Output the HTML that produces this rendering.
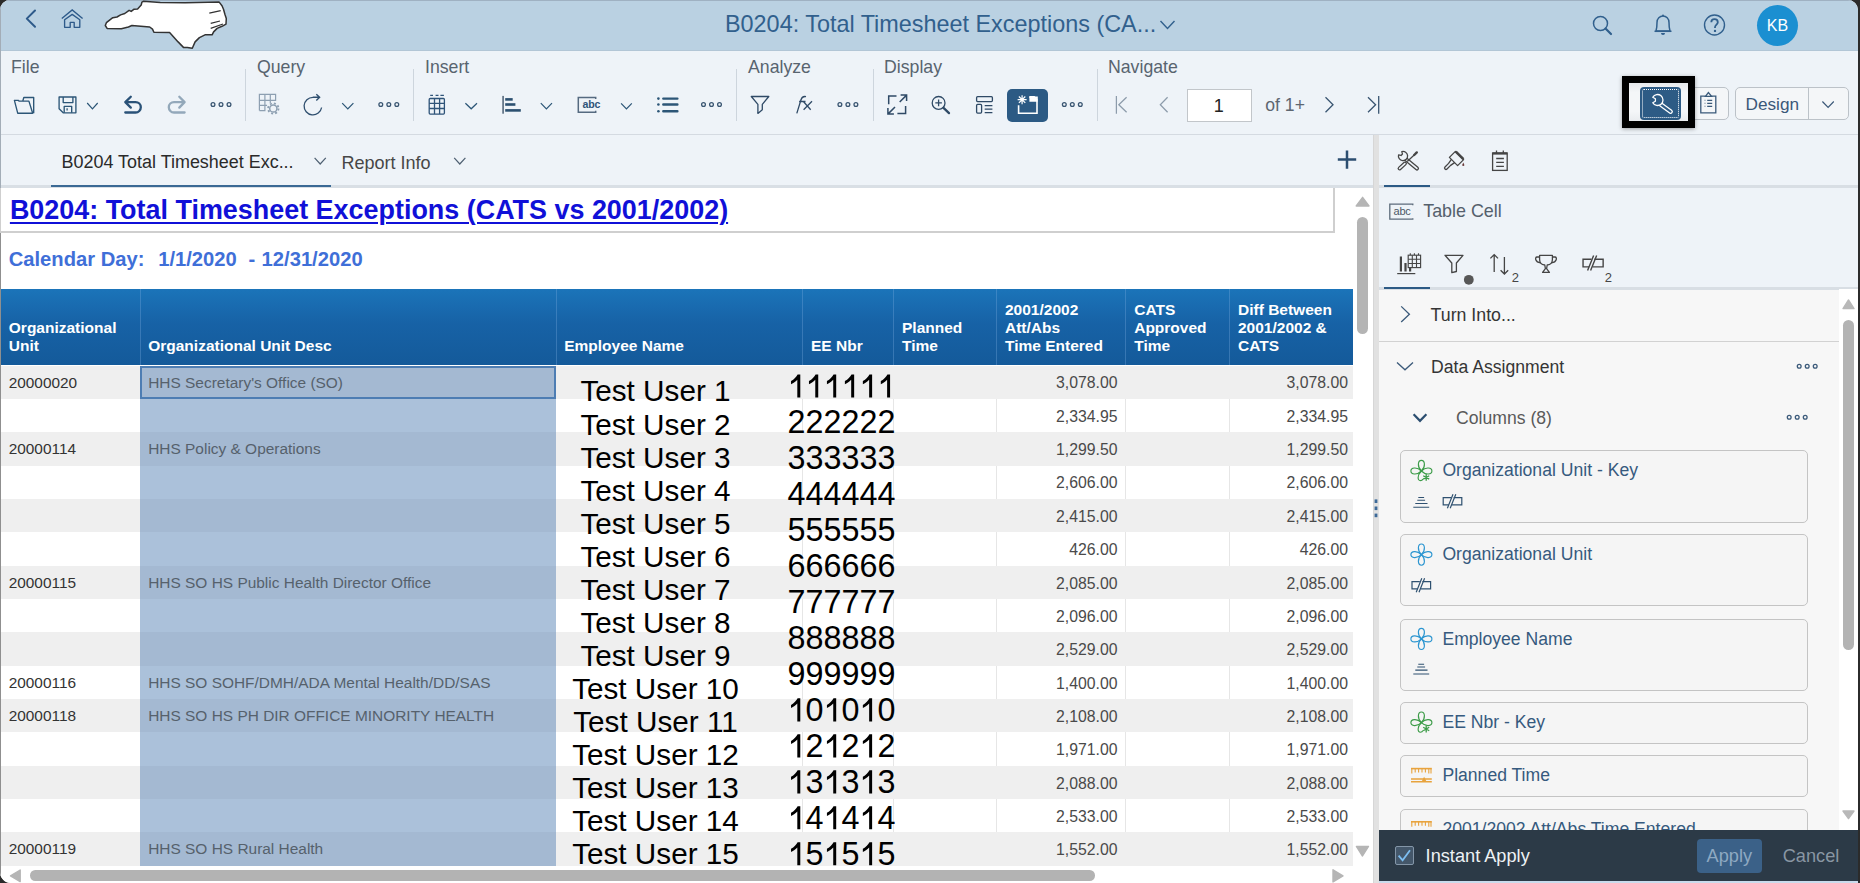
<!DOCTYPE html>
<html><head><meta charset="utf-8"><style>
*{box-sizing:border-box;margin:0;padding:0}
html,body{width:1860px;height:883px;overflow:hidden;background:#2b2b2b;font-family:"Liberation Sans",sans-serif}
.a{position:absolute}
.t{position:absolute;white-space:pre;line-height:1}
svg{position:absolute;overflow:visible}
#win{position:absolute;left:0;top:0;width:1858px;height:883px;border-radius:10px 10px 0 11px;overflow:hidden;background:#fff}
</style></head><body><div id="win">
<div class="a" style="left:0px;top:0px;width:1858px;height:51px;background:#bad1e2;border-top:1px solid #9fb1c2;border-bottom:1px solid #b2c6d6"></div>
<svg style="left:24px;top:8px;" width="16" height="22" viewBox="0 0 16 22"><path d="M11 2.5 L2.8 10.6 L11 18.8" fill="none" stroke="#2e5a8a" stroke-width="2" stroke-linecap="round" stroke-linejoin="round"/></svg>
<svg style="left:100px;top:0px;" width="132" height="52" viewBox="0 0 132 52"><path d="M5.3 25.5 L6.4 22.7 L9.9 19.9 L12.8 17.7 L17 17 L20.6 14.9 L24.8 13.5 L29.1 10.3 L31.2 11.4 L34.1 9.2 L37.6 8.9 L41.2 5 L41.9 2.1 L43.3 1.3 L60.3 2.5 L85.2 2.8 L119.2 2.1 L122 5.7 L123.5 9.2 L124.9 14.2 L126.3 18.5 L126 24.1 L122 26.3 L117.1 28.4 L113.6 31.9 L112.1 34.8 L105 34.8 L99.4 37.6 L95.1 41.9 L92.3 48.3 L87.3 47.6 L83.7 47.6 L78.1 41.9 L69.6 32.6 L53.9 32.3 L52.5 29.1 L49.7 27 L31.9 25.5 L28.4 27 L21.3 28.7 L7.1 28.4 Z" fill="#fff" stroke="#333" stroke-width="1.5" stroke-linejoin="round"/><path d="M109.3 13.1 L120.7 10.6 M110.7 23.4 L120 21 M110.7 28.4 L123 24" stroke="#333" stroke-width="1.2" fill="none"/></svg>
<div class="t" style="left:725px;top:12.89px;font-size:23.4px;color:#31608d;font-weight:400;">B0204: Total Timesheet Exceptions (CA...</div>
<svg style="left:1159px;top:19px;" width="18" height="12" viewBox="0 0 18 12"><path d="M1.5 2 L8.5 9.5 L15.5 2" fill="none" stroke="#31608d" stroke-width="1.4"/></svg>
<svg style="left:1592px;top:15px;" width="22" height="22" viewBox="0 0 22 22"><circle cx="8.5" cy="8.5" r="7" fill="none" stroke="#31608d" stroke-width="1.5"/><path d="M13.5 13.5 L19 19" stroke="#31608d" stroke-width="2.2" stroke-linecap="round"/></svg>
<svg style="left:1652px;top:13px;" width="22" height="24" viewBox="0 0 22 24"><path d="M4 18 C5 15 5 12 5 9.5 C5 5.5 7.8 3 11 3 C14.2 3 17 5.5 17 9.5 C17 12 17 15 18 18 Z" fill="none" stroke="#31608d" stroke-width="1.5" stroke-linejoin="round"/><path d="M2.5 18.3 H19.5" stroke="#31608d" stroke-width="1.5"/><path d="M9 20 A2 2 0 0 0 13 20 Z" fill="#31608d"/><circle cx="11" cy="2.6" r="1" fill="#31608d"/></svg>
<svg style="left:1703px;top:14px;" width="23" height="23" viewBox="0 0 23 23"><circle cx="11.5" cy="11" r="10" fill="none" stroke="#31608d" stroke-width="1.4"/><path d="M8.3 8.3 C8.3 6.3 9.8 5.2 11.5 5.2 C13.4 5.2 14.8 6.4 14.8 8.2 C14.8 10.3 12 10.8 12 13.2 V14" fill="none" stroke="#31608d" stroke-width="1.8"/><circle cx="12" cy="16.9" r="1.2" fill="#31608d"/></svg>
<div class="a" style="left:1757px;top:5px;width:41px;height:41px;border-radius:50%;background:#1b8fd1"></div>
<div class="t" style="left:1757px;width:41px;text-align:center;top:17.86px;font-size:16px;color:#fff;font-weight:400">KB</div>
<div class="a" style="left:0px;top:51px;width:1858px;height:84px;background:#eef3f8;border-bottom:1px solid #d4dae1"></div>
<div class="t" style="left:11px;top:58.62px;font-size:17.7px;color:#58646f;font-weight:400;">File</div>
<div class="t" style="left:257px;top:58.62px;font-size:17.7px;color:#58646f;font-weight:400;">Query</div>
<div class="t" style="left:425px;top:58.62px;font-size:17.7px;color:#58646f;font-weight:400;">Insert</div>
<div class="t" style="left:748px;top:58.62px;font-size:17.7px;color:#58646f;font-weight:400;">Analyze</div>
<div class="t" style="left:884px;top:58.62px;font-size:17.7px;color:#58646f;font-weight:400;">Display</div>
<div class="t" style="left:1108px;top:58.62px;font-size:17.7px;color:#58646f;font-weight:400;">Navigate</div>
<div class="a" style="left:245px;top:69px;width:1px;height:52px;background:#cdd5dd"></div>
<div class="a" style="left:413px;top:69px;width:1px;height:52px;background:#cdd5dd"></div>
<div class="a" style="left:736px;top:69px;width:1px;height:52px;background:#cdd5dd"></div>
<div class="a" style="left:873px;top:69px;width:1px;height:52px;background:#cdd5dd"></div>
<div class="a" style="left:1097px;top:69px;width:1px;height:52px;background:#cdd5dd"></div>
<div class="a" style="left:1007px;top:89px;width:41px;height:33px;background:#2c5a84;border-radius:5px"></div>
<div class="a" style="left:1187px;top:89px;width:65px;height:33px;background:#fff;border:1px solid #c2c6ca"></div>
<div class="t" style="left:1213.8px;top:96.56px;font-size:18px;color:#222;font-weight:400;">1</div>
<div class="t" style="left:1265.3px;top:97.40px;font-size:17.6px;color:#5d6670;font-weight:400;">of 1+</div>
<div class="a" style="left:1686px;top:87px;width:43px;height:33px;background:#f4f6f8;border:1px solid #bcc2c8;border-radius:5px"></div>
<div class="a" style="left:1735px;top:87px;width:114px;height:33px;background:#f4f6f8;border:1px solid #bcc2c8;border-radius:5px"></div>
<div class="a" style="left:1808px;top:87px;width:1px;height:33px;background:#bcc2c8"></div>
<div class="t" style="left:1745.5px;top:95.94px;font-size:17.2px;color:#3b5878;font-weight:400;">Design</div>
<div class="a" style="left:1622px;top:76px;width:73px;height:52px;border:7px solid #000;background:linear-gradient(#e6e9ec,#f4f6f8 25%,#f4f6f8 75%,#e9ecef);box-shadow:0 1px 4px rgba(0,0,0,.35)"></div>
<div class="a" style="left:1640px;top:87px;width:41px;height:33px;background:#2d5b85;border-radius:4px"></div>
<div class="a" style="left:1642px;top:89px;width:37px;height:29px;border:1px dotted #ffffff;border-radius:2px"></div>
<div class="a" style="left:0px;top:135px;width:1373px;height:53px;background:#eef3f8"></div>
<div class="a" style="left:0px;top:185px;width:1373px;height:3px;background:#d9dfe5"></div>
<div class="a" style="left:51px;top:184.7px;width:280px;height:2.6px;background:#3a6994"></div>
<div class="t" style="left:61.6px;top:154.41px;font-size:17.95px;color:#2a2a2a;font-weight:400;">B0204 Total Timesheet Exc...</div>
<div class="t" style="left:341.4px;top:154.32px;font-size:18.05px;color:#474747;font-weight:400;">Report Info</div>
<div class="a" style="left:0px;top:188px;width:1373px;height:695px;background:#fff"></div>
<div class="a" style="left:0px;top:0px;width:1px;height:188px;background:#a3adb7"></div>
<div class="a" style="left:0px;top:188px;width:1335px;height:45px;border:2px solid #cfcfcf;border-top:none;border-left:1px solid #cfcfcf"></div>
<div class="t" style="left:9.9px;top:197.20px;font-size:26.93px;color:#1010d8;font-weight:700;"><u style="text-decoration-thickness:2px;text-underline-offset:3px">B0204: Total Timesheet Exceptions (CATS vs 2001/2002)</u></div>
<div class="t" style="left:8.7px;top:248.90px;font-size:20.2px;color:#3f6fd8;font-weight:700;">Calendar Day:</div>
<div class="t" style="left:158.2px;top:248.90px;font-size:20.2px;color:#3f6fd8;font-weight:700;">1/1/2020</div>
<div class="t" style="left:248.6px;top:248.90px;font-size:20.2px;color:#3f6fd8;font-weight:700;">-</div>
<div class="t" style="left:261.6px;top:248.90px;font-size:20.2px;color:#3f6fd8;font-weight:700;">12/31/2020</div>
<div class="a" style="left:1357px;top:216.6px;width:11px;height:117.4px;background:#b4b4b4;border-radius:5.5px"></div>
<div class="a" style="left:30px;top:870.3px;width:1065px;height:10.5px;background:#b3b3b3;border-radius:5.25px"></div>
<div class="a" style="left:0px;top:289px;width:1353px;height:76px;background:linear-gradient(#1b74b9,#1762a6 45%,#145a9a)"></div>
<div class="a" style="left:140px;top:289px;width:1px;height:76px;background:rgba(120,170,220,.35)"></div>
<div class="a" style="left:556px;top:289px;width:1px;height:76px;background:rgba(120,170,220,.35)"></div>
<div class="a" style="left:802px;top:289px;width:1px;height:76px;background:rgba(120,170,220,.35)"></div>
<div class="a" style="left:893px;top:289px;width:1px;height:76px;background:rgba(120,170,220,.35)"></div>
<div class="a" style="left:996px;top:289px;width:1px;height:76px;background:rgba(120,170,220,.35)"></div>
<div class="a" style="left:1125px;top:289px;width:1px;height:76px;background:rgba(120,170,220,.35)"></div>
<div class="a" style="left:1229px;top:289px;width:1px;height:76px;background:rgba(120,170,220,.35)"></div>
<div class="t" style="left:8.8px;top:320.03px;font-size:15.5px;color:#ffffff;font-weight:700;">Organizational</div>
<div class="t" style="left:8.8px;top:338.08px;font-size:15.5px;color:#ffffff;font-weight:700;">Unit</div>
<div class="t" style="left:148.2px;top:338.08px;font-size:15.5px;color:#ffffff;font-weight:700;">Organizational Unit Desc</div>
<div class="t" style="left:564.2px;top:338.08px;font-size:15.5px;color:#ffffff;font-weight:700;">Employee Name</div>
<div class="t" style="left:811px;top:338.08px;font-size:15.5px;color:#ffffff;font-weight:700;">EE Nbr</div>
<div class="t" style="left:902px;top:320.03px;font-size:15.5px;color:#ffffff;font-weight:700;">Planned</div>
<div class="t" style="left:902px;top:338.08px;font-size:15.5px;color:#ffffff;font-weight:700;">Time</div>
<div class="t" style="left:1005px;top:301.98px;font-size:15.5px;color:#ffffff;font-weight:700;">2001/2002</div>
<div class="t" style="left:1005px;top:320.03px;font-size:15.5px;color:#ffffff;font-weight:700;">Att/Abs</div>
<div class="t" style="left:1005px;top:338.08px;font-size:15.5px;color:#ffffff;font-weight:700;">Time Entered</div>
<div class="t" style="left:1134.2px;top:301.98px;font-size:15.5px;color:#ffffff;font-weight:700;">CATS</div>
<div class="t" style="left:1134.2px;top:320.03px;font-size:15.5px;color:#ffffff;font-weight:700;">Approved</div>
<div class="t" style="left:1134.2px;top:338.08px;font-size:15.5px;color:#ffffff;font-weight:700;">Time</div>
<div class="t" style="left:1238px;top:301.98px;font-size:15.5px;color:#ffffff;font-weight:700;">Diff Between</div>
<div class="t" style="left:1238px;top:320.03px;font-size:15.5px;color:#ffffff;font-weight:700;">2001/2002 &amp;</div>
<div class="t" style="left:1238px;top:338.08px;font-size:15.5px;color:#ffffff;font-weight:700;">CATS</div>
<div class="a" style="left:0px;top:365.5px;width:1353px;height:33.550000000000004px;background:#efefef"></div>
<div class="a" style="left:140px;top:365.5px;width:416px;height:33.550000000000004px;background:#a4b9d2"></div>
<div class="t" style="left:8.7px;top:374.56px;font-size:15.4px;color:#333333;font-weight:400;">20000020</div>
<div class="t" style="left:148.2px;top:374.52px;font-size:15.45px;color:#56616c;font-weight:400;">HHS Secretary's Office (SO)</div>
<div class="t" style="left:996px;width:121.5px;text-align:right;top:375.43px;font-size:15.8px;color:#4a4a4a">3,078.00</div>
<div class="t" style="left:1229px;width:119px;text-align:right;top:375.43px;font-size:15.8px;color:#4a4a4a">3,078.00</div>
<div class="a" style="left:0px;top:398.85px;width:1353px;height:33.550000000000004px;background:#ffffff"></div>
<div class="a" style="left:140px;top:398.85px;width:416px;height:33.550000000000004px;background:#abc1da"></div>
<div class="a" style="left:802px;top:398.85px;width:1px;height:33.35px;background:#e6e6e6"></div>
<div class="a" style="left:893px;top:398.85px;width:1px;height:33.35px;background:#e6e6e6"></div>
<div class="a" style="left:996px;top:398.85px;width:1px;height:33.35px;background:#e6e6e6"></div>
<div class="a" style="left:1125px;top:398.85px;width:1px;height:33.35px;background:#e6e6e6"></div>
<div class="a" style="left:1229px;top:398.85px;width:1px;height:33.35px;background:#e6e6e6"></div>
<div class="t" style="left:996px;width:121.5px;text-align:right;top:408.78px;font-size:15.8px;color:#4a4a4a">2,334.95</div>
<div class="t" style="left:1229px;width:119px;text-align:right;top:408.78px;font-size:15.8px;color:#4a4a4a">2,334.95</div>
<div class="a" style="left:0px;top:432.2px;width:1353px;height:33.550000000000004px;background:#efefef"></div>
<div class="a" style="left:140px;top:432.2px;width:416px;height:33.550000000000004px;background:#a4b9d2"></div>
<div class="t" style="left:8.7px;top:441.26px;font-size:15.4px;color:#333333;font-weight:400;">20000114</div>
<div class="t" style="left:148.2px;top:441.22px;font-size:15.45px;color:#56616c;font-weight:400;">HHS Policy &amp; Operations</div>
<div class="t" style="left:996px;width:121.5px;text-align:right;top:442.13px;font-size:15.8px;color:#4a4a4a">1,299.50</div>
<div class="t" style="left:1229px;width:119px;text-align:right;top:442.13px;font-size:15.8px;color:#4a4a4a">1,299.50</div>
<div class="a" style="left:0px;top:465.55px;width:1353px;height:33.550000000000004px;background:#ffffff"></div>
<div class="a" style="left:140px;top:465.55px;width:416px;height:33.550000000000004px;background:#abc1da"></div>
<div class="a" style="left:802px;top:465.55px;width:1px;height:33.35px;background:#e6e6e6"></div>
<div class="a" style="left:893px;top:465.55px;width:1px;height:33.35px;background:#e6e6e6"></div>
<div class="a" style="left:996px;top:465.55px;width:1px;height:33.35px;background:#e6e6e6"></div>
<div class="a" style="left:1125px;top:465.55px;width:1px;height:33.35px;background:#e6e6e6"></div>
<div class="a" style="left:1229px;top:465.55px;width:1px;height:33.35px;background:#e6e6e6"></div>
<div class="t" style="left:996px;width:121.5px;text-align:right;top:475.48px;font-size:15.8px;color:#4a4a4a">2,606.00</div>
<div class="t" style="left:1229px;width:119px;text-align:right;top:475.48px;font-size:15.8px;color:#4a4a4a">2,606.00</div>
<div class="a" style="left:0px;top:498.9px;width:1353px;height:33.550000000000004px;background:#efefef"></div>
<div class="a" style="left:140px;top:498.9px;width:416px;height:33.550000000000004px;background:#a4b9d2"></div>
<div class="t" style="left:996px;width:121.5px;text-align:right;top:508.83px;font-size:15.8px;color:#4a4a4a">2,415.00</div>
<div class="t" style="left:1229px;width:119px;text-align:right;top:508.83px;font-size:15.8px;color:#4a4a4a">2,415.00</div>
<div class="a" style="left:0px;top:532.25px;width:1353px;height:33.550000000000004px;background:#ffffff"></div>
<div class="a" style="left:140px;top:532.25px;width:416px;height:33.550000000000004px;background:#abc1da"></div>
<div class="a" style="left:802px;top:532.25px;width:1px;height:33.35px;background:#e6e6e6"></div>
<div class="a" style="left:893px;top:532.25px;width:1px;height:33.35px;background:#e6e6e6"></div>
<div class="a" style="left:996px;top:532.25px;width:1px;height:33.35px;background:#e6e6e6"></div>
<div class="a" style="left:1125px;top:532.25px;width:1px;height:33.35px;background:#e6e6e6"></div>
<div class="a" style="left:1229px;top:532.25px;width:1px;height:33.35px;background:#e6e6e6"></div>
<div class="t" style="left:996px;width:121.5px;text-align:right;top:542.18px;font-size:15.8px;color:#4a4a4a">426.00</div>
<div class="t" style="left:1229px;width:119px;text-align:right;top:542.18px;font-size:15.8px;color:#4a4a4a">426.00</div>
<div class="a" style="left:0px;top:565.6px;width:1353px;height:33.550000000000004px;background:#efefef"></div>
<div class="a" style="left:140px;top:565.6px;width:416px;height:33.550000000000004px;background:#a4b9d2"></div>
<div class="t" style="left:8.7px;top:574.66px;font-size:15.4px;color:#333333;font-weight:400;">20000115</div>
<div class="t" style="left:148.2px;top:574.62px;font-size:15.45px;color:#56616c;font-weight:400;">HHS SO HS Public Health Director Office</div>
<div class="t" style="left:996px;width:121.5px;text-align:right;top:575.53px;font-size:15.8px;color:#4a4a4a">2,085.00</div>
<div class="t" style="left:1229px;width:119px;text-align:right;top:575.53px;font-size:15.8px;color:#4a4a4a">2,085.00</div>
<div class="a" style="left:0px;top:598.95px;width:1353px;height:33.550000000000004px;background:#ffffff"></div>
<div class="a" style="left:140px;top:598.95px;width:416px;height:33.550000000000004px;background:#abc1da"></div>
<div class="a" style="left:802px;top:598.95px;width:1px;height:33.35px;background:#e6e6e6"></div>
<div class="a" style="left:893px;top:598.95px;width:1px;height:33.35px;background:#e6e6e6"></div>
<div class="a" style="left:996px;top:598.95px;width:1px;height:33.35px;background:#e6e6e6"></div>
<div class="a" style="left:1125px;top:598.95px;width:1px;height:33.35px;background:#e6e6e6"></div>
<div class="a" style="left:1229px;top:598.95px;width:1px;height:33.35px;background:#e6e6e6"></div>
<div class="t" style="left:996px;width:121.5px;text-align:right;top:608.88px;font-size:15.8px;color:#4a4a4a">2,096.00</div>
<div class="t" style="left:1229px;width:119px;text-align:right;top:608.88px;font-size:15.8px;color:#4a4a4a">2,096.00</div>
<div class="a" style="left:0px;top:632.3px;width:1353px;height:33.550000000000004px;background:#efefef"></div>
<div class="a" style="left:140px;top:632.3px;width:416px;height:33.550000000000004px;background:#a4b9d2"></div>
<div class="t" style="left:996px;width:121.5px;text-align:right;top:642.23px;font-size:15.8px;color:#4a4a4a">2,529.00</div>
<div class="t" style="left:1229px;width:119px;text-align:right;top:642.23px;font-size:15.8px;color:#4a4a4a">2,529.00</div>
<div class="a" style="left:0px;top:665.65px;width:1353px;height:33.550000000000004px;background:#ffffff"></div>
<div class="a" style="left:140px;top:665.65px;width:416px;height:33.550000000000004px;background:#abc1da"></div>
<div class="a" style="left:802px;top:665.65px;width:1px;height:33.35px;background:#e6e6e6"></div>
<div class="a" style="left:893px;top:665.65px;width:1px;height:33.35px;background:#e6e6e6"></div>
<div class="a" style="left:996px;top:665.65px;width:1px;height:33.35px;background:#e6e6e6"></div>
<div class="a" style="left:1125px;top:665.65px;width:1px;height:33.35px;background:#e6e6e6"></div>
<div class="a" style="left:1229px;top:665.65px;width:1px;height:33.35px;background:#e6e6e6"></div>
<div class="t" style="left:8.7px;top:674.71px;font-size:15.4px;color:#333333;font-weight:400;">20000116</div>
<div class="t" style="left:148.2px;top:674.67px;font-size:15.45px;color:#56616c;font-weight:400;">HHS SO SOHF/DMH/ADA Mental Health/DD/SAS</div>
<div class="t" style="left:996px;width:121.5px;text-align:right;top:675.58px;font-size:15.8px;color:#4a4a4a">1,400.00</div>
<div class="t" style="left:1229px;width:119px;text-align:right;top:675.58px;font-size:15.8px;color:#4a4a4a">1,400.00</div>
<div class="a" style="left:0px;top:699.0px;width:1353px;height:33.550000000000004px;background:#efefef"></div>
<div class="a" style="left:140px;top:699.0px;width:416px;height:33.550000000000004px;background:#a4b9d2"></div>
<div class="t" style="left:8.7px;top:708.06px;font-size:15.4px;color:#333333;font-weight:400;">20000118</div>
<div class="t" style="left:148.2px;top:708.02px;font-size:15.45px;color:#56616c;font-weight:400;">HHS SO HS PH DIR OFFICE MINORITY HEALTH</div>
<div class="t" style="left:996px;width:121.5px;text-align:right;top:708.93px;font-size:15.8px;color:#4a4a4a">2,108.00</div>
<div class="t" style="left:1229px;width:119px;text-align:right;top:708.93px;font-size:15.8px;color:#4a4a4a">2,108.00</div>
<div class="a" style="left:0px;top:732.35px;width:1353px;height:33.550000000000004px;background:#ffffff"></div>
<div class="a" style="left:140px;top:732.35px;width:416px;height:33.550000000000004px;background:#abc1da"></div>
<div class="a" style="left:802px;top:732.35px;width:1px;height:33.35px;background:#e6e6e6"></div>
<div class="a" style="left:893px;top:732.35px;width:1px;height:33.35px;background:#e6e6e6"></div>
<div class="a" style="left:996px;top:732.35px;width:1px;height:33.35px;background:#e6e6e6"></div>
<div class="a" style="left:1125px;top:732.35px;width:1px;height:33.35px;background:#e6e6e6"></div>
<div class="a" style="left:1229px;top:732.35px;width:1px;height:33.35px;background:#e6e6e6"></div>
<div class="t" style="left:996px;width:121.5px;text-align:right;top:742.28px;font-size:15.8px;color:#4a4a4a">1,971.00</div>
<div class="t" style="left:1229px;width:119px;text-align:right;top:742.28px;font-size:15.8px;color:#4a4a4a">1,971.00</div>
<div class="a" style="left:0px;top:765.7px;width:1353px;height:33.550000000000004px;background:#efefef"></div>
<div class="a" style="left:140px;top:765.7px;width:416px;height:33.550000000000004px;background:#a4b9d2"></div>
<div class="t" style="left:996px;width:121.5px;text-align:right;top:775.63px;font-size:15.8px;color:#4a4a4a">2,088.00</div>
<div class="t" style="left:1229px;width:119px;text-align:right;top:775.63px;font-size:15.8px;color:#4a4a4a">2,088.00</div>
<div class="a" style="left:0px;top:799.05px;width:1353px;height:33.550000000000004px;background:#ffffff"></div>
<div class="a" style="left:140px;top:799.05px;width:416px;height:33.550000000000004px;background:#abc1da"></div>
<div class="a" style="left:802px;top:799.05px;width:1px;height:33.35px;background:#e6e6e6"></div>
<div class="a" style="left:893px;top:799.05px;width:1px;height:33.35px;background:#e6e6e6"></div>
<div class="a" style="left:996px;top:799.05px;width:1px;height:33.35px;background:#e6e6e6"></div>
<div class="a" style="left:1125px;top:799.05px;width:1px;height:33.35px;background:#e6e6e6"></div>
<div class="a" style="left:1229px;top:799.05px;width:1px;height:33.35px;background:#e6e6e6"></div>
<div class="t" style="left:996px;width:121.5px;text-align:right;top:808.98px;font-size:15.8px;color:#4a4a4a">2,533.00</div>
<div class="t" style="left:1229px;width:119px;text-align:right;top:808.98px;font-size:15.8px;color:#4a4a4a">2,533.00</div>
<div class="a" style="left:0px;top:832.4px;width:1353px;height:33.550000000000004px;background:#efefef"></div>
<div class="a" style="left:140px;top:832.4px;width:416px;height:33.550000000000004px;background:#a4b9d2"></div>
<div class="t" style="left:8.7px;top:841.46px;font-size:15.4px;color:#333333;font-weight:400;">20000119</div>
<div class="t" style="left:148.2px;top:841.42px;font-size:15.45px;color:#56616c;font-weight:400;">HHS SO HS Rural Health</div>
<div class="t" style="left:996px;width:121.5px;text-align:right;top:842.33px;font-size:15.8px;color:#4a4a4a">1,552.00</div>
<div class="t" style="left:1229px;width:119px;text-align:right;top:842.33px;font-size:15.8px;color:#4a4a4a">1,552.00</div>
<div class="a" style="left:140px;top:366px;width:416px;height:33px;border:2px solid #4d7db3"></div>
<div class="t" style="left:555.5px;width:200px;text-align:center;top:376.46px;font-size:29.7px;color:#000">Test User 1</div>
<div class="t" style="left:555.5px;width:200px;text-align:center;top:409.50px;font-size:29.7px;color:#000">Test User 2</div>
<div class="t" style="left:555.5px;width:200px;text-align:center;top:442.54px;font-size:29.7px;color:#000">Test User 3</div>
<div class="t" style="left:555.5px;width:200px;text-align:center;top:475.58px;font-size:29.7px;color:#000">Test User 4</div>
<div class="t" style="left:555.5px;width:200px;text-align:center;top:508.62px;font-size:29.7px;color:#000">Test User 5</div>
<div class="t" style="left:555.5px;width:200px;text-align:center;top:541.66px;font-size:29.7px;color:#000">Test User 6</div>
<div class="t" style="left:555.5px;width:200px;text-align:center;top:574.70px;font-size:29.7px;color:#000">Test User 7</div>
<div class="t" style="left:555.5px;width:200px;text-align:center;top:607.74px;font-size:29.7px;color:#000">Test User 8</div>
<div class="t" style="left:555.5px;width:200px;text-align:center;top:640.78px;font-size:29.7px;color:#000">Test User 9</div>
<div class="t" style="left:555.5px;width:200px;text-align:center;top:673.82px;font-size:29.7px;color:#000">Test User 10</div>
<div class="t" style="left:555.5px;width:200px;text-align:center;top:706.86px;font-size:29.7px;color:#000">Test User 11</div>
<div class="t" style="left:555.5px;width:200px;text-align:center;top:739.90px;font-size:29.7px;color:#000">Test User 12</div>
<div class="t" style="left:555.5px;width:200px;text-align:center;top:772.94px;font-size:29.7px;color:#000">Test User 13</div>
<div class="t" style="left:555.5px;width:200px;text-align:center;top:805.98px;font-size:29.7px;color:#000">Test User 14</div>
<div class="t" style="left:555.5px;width:200px;text-align:center;top:839.02px;font-size:29.7px;color:#000">Test User 15</div>
<div class="t" style="left:787.62px;top:406.24px;font-size:32.3px;color:#000;font-weight:400;">2</div>
<div class="t" style="left:805.58px;top:406.24px;font-size:32.3px;color:#000;font-weight:400;">2</div>
<div class="t" style="left:823.54px;top:406.24px;font-size:32.3px;color:#000;font-weight:400;">2</div>
<div class="t" style="left:841.5px;top:406.24px;font-size:32.3px;color:#000;font-weight:400;">2</div>
<div class="t" style="left:859.46px;top:406.24px;font-size:32.3px;color:#000;font-weight:400;">2</div>
<div class="t" style="left:877.42px;top:406.24px;font-size:32.3px;color:#000;font-weight:400;">2</div>
<div class="t" style="left:787.62px;top:442.22px;font-size:32.3px;color:#000;font-weight:400;">3</div>
<div class="t" style="left:805.58px;top:442.22px;font-size:32.3px;color:#000;font-weight:400;">3</div>
<div class="t" style="left:823.54px;top:442.22px;font-size:32.3px;color:#000;font-weight:400;">3</div>
<div class="t" style="left:841.5px;top:442.22px;font-size:32.3px;color:#000;font-weight:400;">3</div>
<div class="t" style="left:859.46px;top:442.22px;font-size:32.3px;color:#000;font-weight:400;">3</div>
<div class="t" style="left:877.42px;top:442.22px;font-size:32.3px;color:#000;font-weight:400;">3</div>
<div class="t" style="left:787.62px;top:478.20px;font-size:32.3px;color:#000;font-weight:400;">4</div>
<div class="t" style="left:805.58px;top:478.20px;font-size:32.3px;color:#000;font-weight:400;">4</div>
<div class="t" style="left:823.54px;top:478.20px;font-size:32.3px;color:#000;font-weight:400;">4</div>
<div class="t" style="left:841.5px;top:478.20px;font-size:32.3px;color:#000;font-weight:400;">4</div>
<div class="t" style="left:859.46px;top:478.20px;font-size:32.3px;color:#000;font-weight:400;">4</div>
<div class="t" style="left:877.42px;top:478.20px;font-size:32.3px;color:#000;font-weight:400;">4</div>
<div class="t" style="left:787.62px;top:514.18px;font-size:32.3px;color:#000;font-weight:400;">5</div>
<div class="t" style="left:805.58px;top:514.18px;font-size:32.3px;color:#000;font-weight:400;">5</div>
<div class="t" style="left:823.54px;top:514.18px;font-size:32.3px;color:#000;font-weight:400;">5</div>
<div class="t" style="left:841.5px;top:514.18px;font-size:32.3px;color:#000;font-weight:400;">5</div>
<div class="t" style="left:859.46px;top:514.18px;font-size:32.3px;color:#000;font-weight:400;">5</div>
<div class="t" style="left:877.42px;top:514.18px;font-size:32.3px;color:#000;font-weight:400;">5</div>
<div class="t" style="left:787.62px;top:550.16px;font-size:32.3px;color:#000;font-weight:400;">6</div>
<div class="t" style="left:805.58px;top:550.16px;font-size:32.3px;color:#000;font-weight:400;">6</div>
<div class="t" style="left:823.54px;top:550.16px;font-size:32.3px;color:#000;font-weight:400;">6</div>
<div class="t" style="left:841.5px;top:550.16px;font-size:32.3px;color:#000;font-weight:400;">6</div>
<div class="t" style="left:859.46px;top:550.16px;font-size:32.3px;color:#000;font-weight:400;">6</div>
<div class="t" style="left:877.42px;top:550.16px;font-size:32.3px;color:#000;font-weight:400;">6</div>
<div class="t" style="left:787.62px;top:586.14px;font-size:32.3px;color:#000;font-weight:400;">7</div>
<div class="t" style="left:805.58px;top:586.14px;font-size:32.3px;color:#000;font-weight:400;">7</div>
<div class="t" style="left:823.54px;top:586.14px;font-size:32.3px;color:#000;font-weight:400;">7</div>
<div class="t" style="left:841.5px;top:586.14px;font-size:32.3px;color:#000;font-weight:400;">7</div>
<div class="t" style="left:859.46px;top:586.14px;font-size:32.3px;color:#000;font-weight:400;">7</div>
<div class="t" style="left:877.42px;top:586.14px;font-size:32.3px;color:#000;font-weight:400;">7</div>
<div class="t" style="left:787.62px;top:622.12px;font-size:32.3px;color:#000;font-weight:400;">8</div>
<div class="t" style="left:805.58px;top:622.12px;font-size:32.3px;color:#000;font-weight:400;">8</div>
<div class="t" style="left:823.54px;top:622.12px;font-size:32.3px;color:#000;font-weight:400;">8</div>
<div class="t" style="left:841.5px;top:622.12px;font-size:32.3px;color:#000;font-weight:400;">8</div>
<div class="t" style="left:859.46px;top:622.12px;font-size:32.3px;color:#000;font-weight:400;">8</div>
<div class="t" style="left:877.42px;top:622.12px;font-size:32.3px;color:#000;font-weight:400;">8</div>
<div class="t" style="left:787.62px;top:658.10px;font-size:32.3px;color:#000;font-weight:400;">9</div>
<div class="t" style="left:805.58px;top:658.10px;font-size:32.3px;color:#000;font-weight:400;">9</div>
<div class="t" style="left:823.54px;top:658.10px;font-size:32.3px;color:#000;font-weight:400;">9</div>
<div class="t" style="left:841.5px;top:658.10px;font-size:32.3px;color:#000;font-weight:400;">9</div>
<div class="t" style="left:859.46px;top:658.10px;font-size:32.3px;color:#000;font-weight:400;">9</div>
<div class="t" style="left:877.42px;top:658.10px;font-size:32.3px;color:#000;font-weight:400;">9</div>
<div class="t" style="left:805.58px;top:694.08px;font-size:32.3px;color:#000;font-weight:400;">0</div>
<div class="t" style="left:841.5px;top:694.08px;font-size:32.3px;color:#000;font-weight:400;">0</div>
<div class="t" style="left:877.42px;top:694.08px;font-size:32.3px;color:#000;font-weight:400;">0</div>
<div class="t" style="left:805.58px;top:730.06px;font-size:32.3px;color:#000;font-weight:400;">2</div>
<div class="t" style="left:841.5px;top:730.06px;font-size:32.3px;color:#000;font-weight:400;">2</div>
<div class="t" style="left:877.42px;top:730.06px;font-size:32.3px;color:#000;font-weight:400;">2</div>
<div class="t" style="left:805.58px;top:766.04px;font-size:32.3px;color:#000;font-weight:400;">3</div>
<div class="t" style="left:841.5px;top:766.04px;font-size:32.3px;color:#000;font-weight:400;">3</div>
<div class="t" style="left:877.42px;top:766.04px;font-size:32.3px;color:#000;font-weight:400;">3</div>
<div class="t" style="left:805.58px;top:802.02px;font-size:32.3px;color:#000;font-weight:400;">4</div>
<div class="t" style="left:841.5px;top:802.02px;font-size:32.3px;color:#000;font-weight:400;">4</div>
<div class="t" style="left:877.42px;top:802.02px;font-size:32.3px;color:#000;font-weight:400;">4</div>
<div class="t" style="left:805.58px;top:838.00px;font-size:32.3px;color:#000;font-weight:400;">5</div>
<div class="t" style="left:841.5px;top:838.00px;font-size:32.3px;color:#000;font-weight:400;">5</div>
<div class="t" style="left:877.42px;top:838.00px;font-size:32.3px;color:#000;font-weight:400;">5</div>
<div class="a" style="left:1373px;top:135px;width:6px;height:748px;background:#e1e1e1;border-left:1px solid #d6d6d6"></div>
<div class="a" style="left:1379px;top:135px;width:479px;height:154px;background:#eef3f8"></div>
<div class="a" style="left:1379px;top:289px;width:479px;height:541px;background:#f7f7f7"></div>
<div class="a" style="left:1379px;top:185px;width:479px;height:2.5px;background:#d8dee4"></div>
<div class="a" style="left:1384px;top:184.6px;width:46px;height:2.4px;background:#2c5a85"></div>
<div class="a" style="left:1379px;top:287px;width:479px;height:2.5px;background:#d8dee4"></div>
<div class="a" style="left:1384px;top:286.8px;width:46px;height:2.4px;background:#2c5a85"></div>
<div class="t" style="left:1423.2px;top:203.35px;font-size:17.9px;color:#55606c;font-weight:400;">Table Cell</div>
<div class="t" style="left:1511.8px;top:270.60px;font-size:13px;color:#454545;font-weight:400;">2</div>
<div class="t" style="left:1604.8px;top:270.60px;font-size:13px;color:#454545;font-weight:400;">2</div>
<div class="t" style="left:1430.6px;top:306.57px;font-size:17.75px;color:#353535;font-weight:400;">Turn Into...</div>
<div class="a" style="left:1379px;top:340.5px;width:461px;height:1px;background:#d2d2d2"></div>
<div class="t" style="left:1431.1px;top:359.00px;font-size:17.6px;color:#353535;font-weight:400;">Data Assignment</div>
<div class="t" style="left:1456.1px;top:410.00px;font-size:17.6px;color:#5a5a5a;font-weight:400;">Columns (8)</div>
<div class="a" style="left:1400px;top:450.2px;width:408px;height:72.40000000000003px;background:#f5f5f5;border:1px solid #c4c4c4;border-radius:5px"></div>
<div class="t" style="left:1442.4px;top:462.10px;font-size:17.6px;color:#365a7e;font-weight:400;">Organizational Unit - Key</div>
<div class="a" style="left:1400px;top:534.4px;width:408px;height:71.80000000000007px;background:#f5f5f5;border:1px solid #c4c4c4;border-radius:5px"></div>
<div class="t" style="left:1442.4px;top:546.40px;font-size:17.6px;color:#365a7e;font-weight:400;">Organizational Unit</div>
<div class="a" style="left:1400px;top:618.7px;width:408px;height:72.59999999999991px;background:#f5f5f5;border:1px solid #c4c4c4;border-radius:5px"></div>
<div class="t" style="left:1442.4px;top:630.70px;font-size:17.6px;color:#365a7e;font-weight:400;">Employee Name</div>
<div class="a" style="left:1400px;top:702.2px;width:408px;height:42.299999999999955px;background:#f5f5f5;border:1px solid #c4c4c4;border-radius:5px"></div>
<div class="t" style="left:1442.4px;top:714.10px;font-size:17.6px;color:#365a7e;font-weight:400;">EE Nbr - Key</div>
<div class="a" style="left:1400px;top:755.4px;width:408px;height:42.0px;background:#f5f5f5;border:1px solid #c4c4c4;border-radius:5px"></div>
<div class="t" style="left:1442.4px;top:767.40px;font-size:17.6px;color:#365a7e;font-weight:400;">Planned Time</div>
<div class="a" style="left:1400px;top:808.6px;width:408px;height:51.39999999999998px;background:#f5f5f5;border:1px solid #c4c4c4;border-radius:5px"></div>
<div class="t" style="left:1442.4px;top:820.60px;font-size:17.6px;color:#365a7e;font-weight:400;">2001/2002 Att/Abs Time Entered</div>
<div class="a" style="left:1839px;top:289px;width:19px;height:541px;background:#ffffff"></div>
<div class="a" style="left:1843px;top:319.7px;width:11px;height:330.3px;background:#b3b3b3;border-radius:5.5px"></div>
<svg style="left:0;top:0" width="1860" height="883" viewBox="0 0 1860 883"><path d="M61.8 18.6 L72.2 9.9 L82.6 18.6" fill="none" stroke="#2e5a8a" stroke-width="1.35"/><path d="M64.6 27.3 V19.8 L72.2 14.4 L79.8 19.8 V27.3 H74.2 V22.4 H70.2 V27.3 Z" fill="none" stroke="#2e5a8a" stroke-width="1.35" stroke-linejoin="round"/><g fill="none" stroke="#2c5677" stroke-width="1.35" stroke-linejoin="round"><path d="M14.4 100.4 H18.5 L19 101.1 H28.9 L32.7 113.2 H17.7 Z"/><path d="M22.8 101 L23.8 97.5 H33.7 V113.2"/></g><g fill="none" stroke="#2c5677" stroke-width="1.35" stroke-linejoin="round"><path d="M59.1 97 H75.9 V112.8 H63.2 L59.1 108.8 Z"/><path d="M63.2 97 V102.6 H72.9 V97"/><path d="M64.2 112.8 V106.4 H71.7 V112.8"/><path d="M67.1 108.3 V110.4" stroke-width="1.3"/></g><path d="M87.2 103 L92.45 108.8 L97.7 103" fill="none" stroke="#2c5677" stroke-width="1.2"/><path d="M130.8 96.7 L125.3 102.1 L130.8 107.6 M125.3 102.1 H135.6 A5.2 5.2 0 0 1 135.6 112.5 H125.3" fill="none" stroke="#2a5278" stroke-width="2.3" stroke-linecap="round" stroke-linejoin="round"/><path d="M179.3 96.7 L184.6 102.1 L179.3 107.6 M184.6 102.1 H174.0 A5.2 5.2 0 0 0 174.0 112.5 H184.6" fill="none" stroke="#93a8ba" stroke-width="2.3" stroke-linecap="round" stroke-linejoin="round"/><circle cx="213.0" cy="104.5" r="1.9" fill="none" stroke="#3a5672" stroke-width="1.3"/><circle cx="221.0" cy="104.5" r="1.9" fill="none" stroke="#3a5672" stroke-width="1.3"/><circle cx="229.0" cy="104.5" r="1.9" fill="none" stroke="#3a5672" stroke-width="1.3"/><g fill="none" stroke="#8d9fb1" stroke-width="1.2"><path d="M259.4 110.6 V94.4 H275.6 V100.3 H259.4 M264.9 94.4 V110.6 H259.4 M270.3 94.4 V103 M259.4 105.3 H267"/></g><circle cx="273.3" cy="108.5" r="3.6" fill="none" stroke="#8d9fb1" stroke-width="1.5"/><circle cx="273.3" cy="108.5" r="5.2" fill="none" stroke="#8d9fb1" stroke-width="1.8" stroke-dasharray="2 2.08"/><path d="M313 97.3 A8.8 8.8 0 1 0 321.6 107.5" fill="none" stroke="#2f4f6f" stroke-width="1.3"/><path d="M313 97.3 H319.6 M316.3 94.3 L319.6 97.3 L316.3 100.4" fill="none" stroke="#2f4f6f" stroke-width="1.4"/><path d="M342.2 103.2 L347.8 109.0 L353.4 103.2" fill="none" stroke="#2c5677" stroke-width="1.2"/><circle cx="380.79999999999995" cy="104.5" r="1.9" fill="none" stroke="#3a5672" stroke-width="1.3"/><circle cx="388.79999999999995" cy="104.5" r="1.9" fill="none" stroke="#3a5672" stroke-width="1.3"/><circle cx="396.79999999999995" cy="104.5" r="1.9" fill="none" stroke="#3a5672" stroke-width="1.3"/><g fill="none" stroke="#2f5479" stroke-width="1.3"><rect x="429.2" y="98.5" width="15.2" height="15.6" rx="1"/><path d="M434.5 98.5 V114.1 M439.6 98.5 V114.1 M429.2 103.4 H444.4 M429.2 108.5 H444.4"/><path d="M430.2 95.4 H433 M435.6 95.4 H438.5 M440.4 95.4 H443.9" stroke-width="1.2"/></g><path d="M465.4 103.2 L471.2 108.8 L477.0 103.2" fill="none" stroke="#2c5677" stroke-width="1.2"/><rect x="502.2" y="95.9" width="1.8" height="17.8" fill="#66788a"/><rect x="505.2" y="98.1" width="7.5" height="2.6" fill="#2c5070"/><rect x="505.2" y="103.2" width="10.2" height="2.6" fill="#2c5070"/><rect x="505.2" y="109.1" width="15.6" height="2.6" fill="#2c5070"/><path d="M540.8 103.2 L546.4 109.0 L552.0 103.2" fill="none" stroke="#2c5677" stroke-width="1.2"/><path d="M595.7 98.9 V97.4 H578.3 V112.2 H595.7 V110.7" fill="none" stroke="#556a80" stroke-width="1.5"/><text x="582.6" y="107.9" font-family="Liberation Sans" font-size="10.6" font-weight="700" fill="#2f5479" letter-spacing="-0.2">abc</text><path d="M621.1 103.3 L626.45 108.89999999999999 L631.8000000000001 103.3" fill="none" stroke="#2c5677" stroke-width="1.2"/><g fill="#2c5677"><circle cx="658.4" cy="98.6" r="1.3"/><circle cx="658.4" cy="104.5" r="1.3"/><circle cx="658.4" cy="111.3" r="1.3"/></g><path d="M663.3 98.6 H677.4 M663.3 104.5 H677.4 M663.3 111.3 H677.4" stroke="#2c5677" stroke-width="2.4" stroke-linecap="round"/><circle cx="703.5" cy="104.5" r="1.9" fill="none" stroke="#3a5672" stroke-width="1.3"/><circle cx="711.5" cy="104.5" r="1.9" fill="none" stroke="#3a5672" stroke-width="1.3"/><circle cx="719.5" cy="104.5" r="1.9" fill="none" stroke="#3a5672" stroke-width="1.3"/><path d="M751.3 96.5 H768.8 L762.3 104.3 V109.8 L757.9 113.4 V104.3 Z" fill="none" stroke="#2f4a66" stroke-width="1.3" stroke-linejoin="round"/><path d="M806 96.6 C803 96 801.6 97.5 801 99.8 L796.8 113.4 M799.1 101.5 H805.5 M803.6 101.8 L810.7 109.8 M812 101.3 L803.6 109.8" fill="none" stroke="#2f4a66" stroke-width="1.3"/><circle cx="839.9" cy="104.5" r="1.9" fill="none" stroke="#3a5672" stroke-width="1.3"/><circle cx="847.9" cy="104.5" r="1.9" fill="none" stroke="#3a5672" stroke-width="1.3"/><circle cx="855.9" cy="104.5" r="1.9" fill="none" stroke="#3a5672" stroke-width="1.3"/><g fill="none" stroke="#2f4a66" stroke-width="1.5"><path d="M888.7 104.3 V96.1 H896.5 M897.4 113.4 H905.6 V106.1"/><path d="M899.7 102 L906.6 95.1 M900.6 95.1 H906.6 V101.1"/><path d="M895 107 L887.9 114.1 M887.9 108 V114.1 H893.9"/></g><circle cx="938.6" cy="102.9" r="6.4" fill="none" stroke="#2f4a66" stroke-width="1.3"/><path d="M935.3 102.9 H941.9 M938.6 99.6 V106.2" stroke="#2f4a66" stroke-width="1.3"/><path d="M943.5 107.8 L949 113.1" stroke="#2f4a66" stroke-width="2.3" stroke-linecap="round"/><g fill="none" stroke="#2f4a66" stroke-width="1.3"><rect x="976.6" y="96.7" width="15.8" height="4.9" rx="1"/><rect x="976.6" y="104.4" width="5" height="8.7" rx="1"/><path d="M984.7 105.6 H992.4 M984.7 109.2 H992.4 M984.7 112.6 H992.4"/></g><path d="M1018.6 105.3 V113.3 H1037 V97.2 H1029.4" fill="none" stroke="#fff" stroke-width="1.6"/><path d="M1029.4 96 H1034.5 L1037.6 99 V101.8 H1029.4 Z" fill="#fff"/><path d="M1022.1 95.2 V104.2 M1017.6 99.7 H1026.6 M1018.9 96.5 L1025.3 102.9 M1025.3 96.5 L1018.9 102.9" stroke="#fff" stroke-width="1.2"/><circle cx="1064.3000000000002" cy="104.5" r="1.9" fill="none" stroke="#3a5672" stroke-width="1.3"/><circle cx="1072.3000000000002" cy="104.5" r="1.9" fill="none" stroke="#3a5672" stroke-width="1.3"/><circle cx="1080.3000000000002" cy="104.5" r="1.9" fill="none" stroke="#3a5672" stroke-width="1.3"/><path d="M1116.4 96 V113.8 M1126.6 97.2 L1118.8 104.7 L1126.6 112.3 M1167.6 97.2 L1160.3 104.7 L1167.6 112.3" fill="none" stroke="#8d9cab" stroke-width="1.25"/><path d="M1325.5 97.2 L1333 104.7 L1325.5 112.3 M1368 97.2 L1375.6 104.7 L1368 112.3 M1378.7 96 V113.8" fill="none" stroke="#3a5672" stroke-width="1.3"/><g fill="none" stroke="#3a5a7a" stroke-width="1.3"><path d="M1705.6 96.2 H1700.8 V112.8 H1715.8 V96.2 H1711.4"/><path d="M1705.4 96.4 L1708.4 92.6 L1711.6 96.4 Z"/></g><path d="M1704.3 100.3 H1705.7 M1704.3 103.3 H1705.7 M1704.3 106.3 H1705.7" stroke="#8b9aa8" stroke-width="1.1"/><path d="M1707.2 100.3 H1712.2 M1707.2 103.3 H1712.2 M1707.2 106.3 H1712.2" stroke="#3a5a7a" stroke-width="1.3"/><path d="M1822.4 101.5 L1828.1000000000001 107.3 L1833.8000000000002 101.5" fill="none" stroke="#3b5878" stroke-width="1.2"/><path d="M1661 104.6 L1670.6 111.6" stroke="#fff" stroke-width="4.6" stroke-linecap="round"/><path d="M1661 104.6 L1670.6 111.6" stroke="#2d5b85" stroke-width="2" stroke-linecap="round"/><path d="M1652.74 97.25 A5.5 5.5 0 1 1 1652.74 102.75 L1655.4 101.2 L1655.4 98.8 Z" fill="#2d5b85" stroke="#fff" stroke-width="1.3" stroke-linejoin="round"/><path d="M314.6 157.8 L320.20000000000005 164.0 L325.8 157.8" fill="none" stroke="#4f6072" stroke-width="1.2"/><path d="M454.2 157.8 L459.8 164.0 L465.4 157.8" fill="none" stroke="#4f6072" stroke-width="1.2"/><path d="M1347 150.5 V168.8 M1337.8 159.6 H1356.2" stroke="#2c4e70" stroke-width="2.5"/><path d="M1356.2 206 L1362.6 197.3 L1369 206 Z" fill="#b5b5b5" stroke="#b5b5b5" stroke-width="1.4" stroke-linejoin="round"/><path d="M1356.4 846.4 L1362.5 856 L1368.5 846.4 Z" fill="#b5b5b5" stroke="#b5b5b5" stroke-width="1.4" stroke-linejoin="round"/><path d="M20.2 870 L10.5 875.8 L20.2 881.6 Z" fill="#b5b5b5" stroke="#b5b5b5" stroke-width="1.4" stroke-linejoin="round"/><path d="M1333 869.8 L1343 875.9 L1333 882 Z" fill="#b5b5b5" stroke="#b5b5b5" stroke-width="1.4" stroke-linejoin="round"/><path d="M797.31 397.60 V379.80 C795.38 381.90 792.79 383.52 791.02 384.16 V381.09 C794.08 379.64 796.34 376.73 797.64 374.47 H800.29 V397.60 Z" fill="#000"/><path d="M815.27 397.60 V379.80 C813.33 381.90 810.75 383.52 808.97 384.16 V381.09 C812.04 379.64 814.30 376.73 815.60 374.47 H818.24 V397.60 Z" fill="#000"/><path d="M833.23 397.60 V379.80 C831.29 381.90 828.71 383.52 826.93 384.16 V381.09 C830.00 379.64 832.26 376.73 833.55 374.47 H836.20 V397.60 Z" fill="#000"/><path d="M851.19 397.60 V379.80 C849.25 381.90 846.67 383.52 844.89 384.16 V381.09 C847.96 379.64 850.22 376.73 851.51 374.47 H854.16 V397.60 Z" fill="#000"/><path d="M869.15 397.60 V379.80 C867.21 381.90 864.63 383.52 862.85 384.16 V381.09 C865.92 379.64 868.18 376.73 869.47 374.47 H872.12 V397.60 Z" fill="#000"/><path d="M887.11 397.60 V379.80 C885.17 381.90 882.59 383.52 880.81 384.16 V381.09 C883.88 379.64 886.14 376.73 887.43 374.47 H890.08 V397.60 Z" fill="#000"/><path d="M797.31 721.42 V703.62 C795.38 705.72 792.79 707.34 791.02 707.98 V704.91 C794.08 703.46 796.34 700.55 797.64 698.29 H800.29 V721.42 Z" fill="#000"/><path d="M833.23 721.42 V703.62 C831.29 705.72 828.71 707.34 826.93 707.98 V704.91 C830.00 703.46 832.26 700.55 833.55 698.29 H836.20 V721.42 Z" fill="#000"/><path d="M869.15 721.42 V703.62 C867.21 705.72 864.63 707.34 862.85 707.98 V704.91 C865.92 703.46 868.18 700.55 869.47 698.29 H872.12 V721.42 Z" fill="#000"/><path d="M797.31 757.40 V739.60 C795.38 741.70 792.79 743.32 791.02 743.96 V740.89 C794.08 739.44 796.34 736.53 797.64 734.27 H800.29 V757.40 Z" fill="#000"/><path d="M833.23 757.40 V739.60 C831.29 741.70 828.71 743.32 826.93 743.96 V740.89 C830.00 739.44 832.26 736.53 833.55 734.27 H836.20 V757.40 Z" fill="#000"/><path d="M869.15 757.40 V739.60 C867.21 741.70 864.63 743.32 862.85 743.96 V740.89 C865.92 739.44 868.18 736.53 869.47 734.27 H872.12 V757.40 Z" fill="#000"/><path d="M797.31 793.38 V775.58 C795.38 777.68 792.79 779.30 791.02 779.94 V776.87 C794.08 775.42 796.34 772.51 797.64 770.25 H800.29 V793.38 Z" fill="#000"/><path d="M833.23 793.38 V775.58 C831.29 777.68 828.71 779.30 826.93 779.94 V776.87 C830.00 775.42 832.26 772.51 833.55 770.25 H836.20 V793.38 Z" fill="#000"/><path d="M869.15 793.38 V775.58 C867.21 777.68 864.63 779.30 862.85 779.94 V776.87 C865.92 775.42 868.18 772.51 869.47 770.25 H872.12 V793.38 Z" fill="#000"/><path d="M797.31 829.36 V811.56 C795.38 813.66 792.79 815.28 791.02 815.92 V812.85 C794.08 811.40 796.34 808.49 797.64 806.23 H800.29 V829.36 Z" fill="#000"/><path d="M833.23 829.36 V811.56 C831.29 813.66 828.71 815.28 826.93 815.92 V812.85 C830.00 811.40 832.26 808.49 833.55 806.23 H836.20 V829.36 Z" fill="#000"/><path d="M869.15 829.36 V811.56 C867.21 813.66 864.63 815.28 862.85 815.92 V812.85 C865.92 811.40 868.18 808.49 869.47 806.23 H872.12 V829.36 Z" fill="#000"/><path d="M797.31 865.34 V847.54 C795.38 849.64 792.79 851.26 791.02 851.90 V848.83 C794.08 847.38 796.34 844.47 797.64 842.21 H800.29 V865.34 Z" fill="#000"/><path d="M833.23 865.34 V847.54 C831.29 849.64 828.71 851.26 826.93 851.90 V848.83 C830.00 847.38 832.26 844.47 833.55 842.21 H836.20 V865.34 Z" fill="#000"/><path d="M869.15 865.34 V847.54 C867.21 849.64 864.63 851.26 862.85 851.90 V848.83 C865.92 847.38 868.18 844.47 869.47 842.21 H872.12 V865.34 Z" fill="#000"/><path d="M1406.3 159.6 L1416.9 168.4" stroke="#454545" stroke-width="4.3" stroke-linecap="round"/><path d="M1406.3 159.6 L1416.9 168.4" stroke="#eef3f8" stroke-width="1.7" stroke-linecap="round"/><path d="M1401.81 151.56 A4.6 4.6 0 1 1 1398.56 154.81 L1401.07 155.48 L1402.48 154.07 Z" fill="#eef3f8" stroke="#454545" stroke-width="1.3" stroke-linejoin="round"/><path d="M1399.6 168.4 L1404.9 163.6" stroke="#454545" stroke-width="4.1" stroke-linecap="round"/><path d="M1399.6 168.4 L1404.9 163.6" stroke="#eef3f8" stroke-width="1.5" stroke-linecap="round"/><path d="M1407.2 161.4 L1414.2 155" stroke="#454545" stroke-width="1.3"/><path d="M1414.2 155 L1416.8 152.4" stroke="#454545" stroke-width="2.4" stroke-linecap="round"/><g fill="none" stroke="#454545" stroke-width="1.3" stroke-linejoin="round"><path d="M1455.4 151.4 L1463.6 159.6 L1457.6 165.6 L1449.4 157.4 Z"/><path d="M1451.4 159.4 L1448.6 163.4 L1445 167 A1.4 1.4 0 0 0 1447 169 L1450.6 165.4 L1454.6 162.6"/></g><path d="M1455.8 151.6 L1463.4 159.2" stroke="#454545" stroke-width="2.6"/><path d="M1463.3 162.6 L1464.4 165 A1.1 1.1 0 0 1 1462.2 165 Z" fill="#6b3b3b"/><g fill="none" stroke="#454545" stroke-width="1.3"><rect x="1492.6" y="153" width="14.6" height="17.4"/><path d="M1496.2 158.5 H1503.9 M1496.2 162.4 H1503.9 M1496.2 166.3 H1503.9"/></g><rect x="1492.6" y="152.4" width="14.6" height="2.2" fill="#454545"/><path d="M1496.5 150.6 V153.4 M1503.3 150.6 V153.4" stroke="#454545" stroke-width="1.3"/><path d="M1412.8 205.2 V204.2 H1389.8 V219.2 H1412.8 V218.2" fill="none" stroke="#5c6b7b" stroke-width="1.3"/><text x="1393.6" y="215.4" font-family="Liberation Sans" font-size="11" fill="#4d5866" letter-spacing="-0.3">abc</text><g fill="#454545"><rect x="1399.8" y="256.5" width="2.2" height="15"/><rect x="1404.4" y="263" width="2.2" height="8.5"/><rect x="1409" y="265.5" width="2.2" height="6"/></g><path d="M1397.2 273.6 H1415.3" stroke="#454545" stroke-width="1.2"/><g fill="#eef3f8" stroke="#454545" stroke-width="1.15"><rect x="1408.2" y="255.2" width="12.4" height="12.4"/></g><path d="M1412.3 255.2 V267.6 M1416.5 255.2 V267.6 M1408.2 259.3 H1420.6 M1408.2 263.5 H1420.6" stroke="#454545" stroke-width="1.1"/><path d="M1410.3 253.2 V255 M1414.4 253.2 V255 M1418.5 253.2 V255" stroke="#454545" stroke-width="1.1"/><path d="M1445 255.3 H1463 L1456.4 263 V271.5 L1451.8 272.6 V263 Z" fill="none" stroke="#454545" stroke-width="1.3" stroke-linejoin="round"/><circle cx="1468.8" cy="279.8" r="4.9" fill="#575757"/><path d="M1494.2 254.6 V272 M1490.4 258.4 L1494.2 254.6 L1498 258.4 M1504.4 257 V274 M1500.6 270.2 L1504.4 274 L1508.2 270.2" fill="none" stroke="#454545" stroke-width="1.3"/><g fill="none" stroke="#454545" stroke-width="1.3" stroke-linejoin="round"><path d="M1539.6 255.4 H1552.4 V259.4 C1552.4 262.6 1550 264.6 1547.2 265 L1546.6 268.6 L1549.4 272.4 H1542.6 L1545.4 268.6 L1544.8 265 C1542 264.6 1539.6 262.6 1539.6 259.4 Z"/><path d="M1539.6 257 H1537 C1535.6 257 1535.4 258.6 1535.8 259.8 C1536.4 261.6 1538.2 262.6 1540.4 262.8 M1552.4 257 H1555 C1556.4 257 1556.6 258.6 1556.2 259.8 C1555.6 261.6 1553.8 262.6 1551.6 262.8"/></g><g fill="none" stroke="#454545" stroke-width="1.3" transform="translate(1582.4 255.4) scale(1.08)"><path d="M8.4 3.5 H0.6 V10.6 H6.2 M11 3.5 H19.2 V10.6 H9.4"/><path d="M13.2 0 L7.6 14 M10.4 0 L4.8 14"/></g><path d="M1401.2 306.4 L1409.4 314.2 L1401.2 322" fill="none" stroke="#3b5a7a" stroke-width="1.3"/><path d="M1397 362.4 L1405 369.8 L1413 362.4" fill="none" stroke="#3b5a7a" stroke-width="1.3"/><circle cx="1799.2" cy="366.2" r="1.9" fill="none" stroke="#3b5a7a" stroke-width="1.3"/><circle cx="1807.2" cy="366.2" r="1.9" fill="none" stroke="#3b5a7a" stroke-width="1.3"/><circle cx="1815.2" cy="366.2" r="1.9" fill="none" stroke="#3b5a7a" stroke-width="1.3"/><path d="M1413.6 414.2 L1420 420.8 L1426.4 414.2" fill="none" stroke="#2c4e70" stroke-width="2.2"/><circle cx="1789.2" cy="417.2" r="1.9" fill="none" stroke="#3b5a7a" stroke-width="1.3"/><circle cx="1797.2" cy="417.2" r="1.9" fill="none" stroke="#3b5a7a" stroke-width="1.3"/><circle cx="1805.2" cy="417.2" r="1.9" fill="none" stroke="#3b5a7a" stroke-width="1.3"/><g fill="none" stroke="#3c9c48" stroke-width="1.15"><path d="M1421.4 471 C1416.8000000000002 466.4 1418.0 460.4 1421.4 460.4 C1424.8000000000002 460.4 1426.0 466.4 1421.4 471 Z"/><path d="M1421.4 471 C1416.8000000000002 466.4 1410.9 467.6 1410.9 471 C1410.9 474.4 1416.8000000000002 475.6 1421.4 471 Z"/><path d="M1421.4 471 C1426.0 466.4 1431.9 467.6 1431.9 471 C1431.9 474.4 1426.0 475.6 1421.4 471 Z"/><path d="M1421.4 471 C1417.0 475.4 1417.4 480.6 1420.4 480.6 C1422.0 480.6 1422.6000000000001 479.8 1423.0 479"/></g><path d="M1426.2 474.0 V480.79999999999995 M1423.2 475.7 L1429.2 479.09999999999997 M1423.2 479.09999999999997 L1429.2 475.7" stroke="#3c9c48" stroke-width="1.3"/><path d="M1418.3 497.5 H1424.1 M1417.3 500.2 H1425.1 M1415.3 503.4 H1427.5 M1413.3 507.3 H1429.2" stroke="#2f5170" stroke-width="1.05"/><g fill="none" stroke="#2f5170" stroke-width="1.2" transform="translate(1442.6 494.2) scale(1.0)"><path d="M8.4 3.5 H0.6 V10.6 H6.2 M11 3.5 H19.2 V10.6 H9.4"/><path d="M13.2 0 L7.6 14 M10.4 0 L4.8 14"/></g><g fill="none" stroke="#2b95d0" stroke-width="1.15"><path d="M1421.4 554.6 C1416.8000000000002 550.0 1418.0 544.0 1421.4 544.0 C1424.8000000000002 544.0 1426.0 550.0 1421.4 554.6 Z"/><path d="M1421.4 554.6 C1416.8000000000002 550.0 1410.9 551.2 1410.9 554.6 C1410.9 558.0 1416.8000000000002 559.2 1421.4 554.6 Z"/><path d="M1421.4 554.6 C1426.0 550.0 1431.9 551.2 1431.9 554.6 C1431.9 558.0 1426.0 559.2 1421.4 554.6 Z"/><path d="M1421.4 554.6 C1416.8000000000002 559.2 1418.0 565.2 1421.4 565.2 C1424.8000000000002 565.2 1426.0 559.2 1421.4 554.6 Z"/></g><g fill="none" stroke="#2f5170" stroke-width="1.2" transform="translate(1411.4 578.2) scale(1.0)"><path d="M8.4 3.5 H0.6 V10.6 H6.2 M11 3.5 H19.2 V10.6 H9.4"/><path d="M13.2 0 L7.6 14 M10.4 0 L4.8 14"/></g><g fill="none" stroke="#2b95d0" stroke-width="1.15"><path d="M1421.4 638.9 C1416.8000000000002 634.3 1418.0 628.3 1421.4 628.3 C1424.8000000000002 628.3 1426.0 634.3 1421.4 638.9 Z"/><path d="M1421.4 638.9 C1416.8000000000002 634.3 1410.9 635.5 1410.9 638.9 C1410.9 642.3 1416.8000000000002 643.5 1421.4 638.9 Z"/><path d="M1421.4 638.9 C1426.0 634.3 1431.9 635.5 1431.9 638.9 C1431.9 642.3 1426.0 643.5 1421.4 638.9 Z"/><path d="M1421.4 638.9 C1416.8000000000002 643.5 1418.0 649.5 1421.4 649.5 C1424.8000000000002 649.5 1426.0 643.5 1421.4 638.9 Z"/></g><path d="M1418.3 664.2 H1424.1 M1417.3 666.9000000000001 H1425.1 M1415.3 670.1 H1427.5 M1413.3 674.0 H1429.2" stroke="#2f5170" stroke-width="1.05"/><g fill="none" stroke="#3c9c48" stroke-width="1.15"><path d="M1421.4 722.6 C1416.8000000000002 718.0 1418.0 712.0 1421.4 712.0 C1424.8000000000002 712.0 1426.0 718.0 1421.4 722.6 Z"/><path d="M1421.4 722.6 C1416.8000000000002 718.0 1410.9 719.2 1410.9 722.6 C1410.9 726.0 1416.8000000000002 727.2 1421.4 722.6 Z"/><path d="M1421.4 722.6 C1426.0 718.0 1431.9 719.2 1431.9 722.6 C1431.9 726.0 1426.0 727.2 1421.4 722.6 Z"/><path d="M1421.4 722.6 C1417.0 727.0 1417.4 732.2 1420.4 732.2 C1422.0 732.2 1422.6000000000001 731.4 1423.0 730.6"/></g><path d="M1426.2 725.6 V732.4 M1423.2 727.3 L1429.2 730.7 M1423.2 730.7 L1429.2 727.3" stroke="#3c9c48" stroke-width="1.3"/><g stroke="#e8a33d" fill="none"><path d="M1411 768.6 H1431.8" stroke-width="1.6"/><path d="M1411.8 768.6 V773.6 M1415.2 768.6 V772.6 M1418.6 768.6 V772.6 M1422 768.6 V772.6 M1425.4 768.6 V772.6 M1428.8 768.6 V773.6 M1431 768.6 V773.6" stroke-width="1.1"/><path d="M1411 779.0 H1431.8 M1411 781.7 H1431.8" stroke-width="1.4"/></g><path d="M1424.1 776.8000000000001 L1421.4 782.0 H1426.8 Z" fill="#e8a33d"/><g stroke="#e8a33d" fill="none"><path d="M1411 821.8 H1431.8" stroke-width="1.6"/><path d="M1411.8 821.8 V826.8 M1415.2 821.8 V825.8 M1418.6 821.8 V825.8 M1422 821.8 V825.8 M1425.4 821.8 V825.8 M1428.8 821.8 V826.8 M1431 821.8 V826.8" stroke-width="1.1"/><path d="M1411 832.1999999999999 H1431.8 M1411 834.9 H1431.8" stroke-width="1.4"/></g><path d="M1424.1 830.0 L1421.4 835.1999999999999 H1426.8 Z" fill="#e8a33d"/><path d="M1843 308.6 L1848.5 300 L1854 308.6 Z" fill="#b8b8b8" stroke="#b8b8b8" stroke-width="1.4" stroke-linejoin="round"/><path d="M1843 811 L1848.5 818.6 L1854 811 Z" fill="#b8b8b8" stroke="#b8b8b8" stroke-width="1.4" stroke-linejoin="round"/><g fill="#3d6a98"><rect x="1374.6" y="499.4" width="2.8" height="3.6"/><rect x="1374.6" y="506.5" width="2.8" height="3.6"/><rect x="1374.6" y="513.6" width="2.8" height="3.6"/></g></svg>
<div class="a" style="left:0;top:233px;width:1px;height:650px;background:#8f8f8f"></div>
<div class="a" style="left:0;top:188px;width:1px;height:45px;background:#cfcfcf"></div>
<div class="a" style="left:1379px;top:830px;width:479px;height:51px;background:#2c3a47"></div>
<div class="a" style="left:1379px;top:881px;width:479px;height:2px;background:#c9dbec"></div>
<div class="a" style="left:1394.6px;top:846px;width:19.4px;height:19.4px;background:#44576a;border:1.5px solid #8496a8;border-radius:2px"></div>
<svg style="left:0;top:0" width="1860" height="883"><path d="M1398.6 855.6 L1402.6 860.4 L1410 850.2" fill="none" stroke="#7dbdf0" stroke-width="1.8"/></svg>
<div class="t" style="left:1425.6px;top:846.59px;font-size:18.2px;color:#eef2f5;font-weight:400;">Instant Apply</div>
<div class="a" style="left:1697px;top:838.7px;width:65px;height:34px;background:#3b6188;border-radius:4px"></div>
<div class="t" style="left:1706.6px;top:846.59px;font-size:18.2px;color:#8ea9c2;font-weight:400;">Apply</div>
<div class="t" style="left:1782.7px;top:846.59px;font-size:18.2px;color:#8996a3;font-weight:400;">Cancel</div>
</div></body></html>
